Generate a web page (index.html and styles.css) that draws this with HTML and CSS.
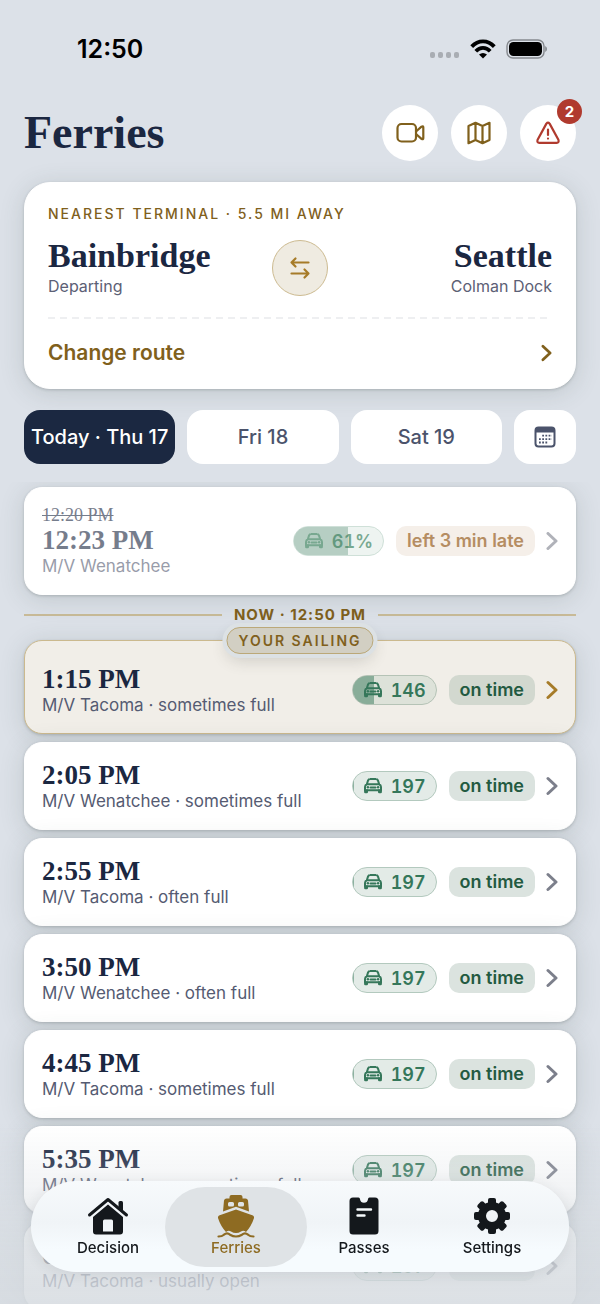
FILE: index.html
```html
<!DOCTYPE html>
<html lang="en">

<head>
  <meta charset="utf-8">
  <title>Ferries</title>
  <meta name="viewport" content="width=device-width, initial-scale=1.0">
  <link rel="stylesheet" href="styles.css">
</head>

<body>
  <!-- shared icons -->
  <svg class="sprite" aria-hidden="true">
    <symbol id="car" viewBox="0 0 20 18">
      <path d="M3.800 7.200 5 3.600Q5.500 2.200 7 2.100 10 1.800 13 2.100 14.500 2.200 15 3.600L16.200 7.200M3.800 7.200Q2 7.900 2 10V13.200H18V10Q18 7.900 16.200 7.200ZM7.500 10.600h5" fill="none" stroke="currentColor" stroke-width="2" stroke-linecap="round" stroke-linejoin="round" />
      <circle cx="4.900" cy="10.200" r="1.200" fill="currentColor" />
      <circle cx="15.100" cy="10.200" r="1.200" fill="currentColor" />
      <path d="M1.100 12.500H5V15q0 1.200-1.200 1.200H2.300Q1.100 16.200 1.100 15ZM15 12.500h3.900V15q0 1.200-1.200 1.200H16.200Q15 16.200 15 15Z" fill="currentColor" />
    </symbol>
    <symbol id="chevron" viewBox="0 0 12 20">
      <path d="M2 2.500 10 10 2 17.500" fill="none" stroke="currentColor" stroke-width="3" stroke-linecap="round" stroke-linejoin="round" />
    </symbol>
  </svg>

  <div class="screen">
    <div class="status-bar">
      <span class="clock">12:50</span>
      <div class="status-icons">
        <svg width="30" height="8" viewBox="0 0 30 8" fill="#a9adb3">
          <rect x="0" y="1" width="5" height="6" rx="2" />
          <rect x="8" y="1" width="5" height="6" rx="2" />
          <rect x="16" y="1" width="5" height="6" rx="2" />
          <rect x="24" y="1" width="5" height="6" rx="2" />
        </svg>
        <svg class="wifi" width="26" height="20" viewBox="0 0 26 20">
          <g fill="none" stroke="#000" stroke-width="3.800">
            <path d="M1.700 7.600Q6.500 2.300 13 2.300T24.300 7.600" />
            <path d="M5.800 12.200Q9 8.900 13 8.900t7.200 3.300" />
          </g>
          <path d="M13 19.500 9 15.600Q13 12.300 17 15.600Z" />
        </svg>
        <svg class="battery" width="41" height="20" viewBox="0 0 41 20">
          <rect x="1" y="1" width="37" height="18" rx="6" fill="none" stroke="#85898e" stroke-width="1.400" />
          <rect x="3" y="3" width="33" height="14" rx="4.500" />
          <path d="M39.200 7q1.800 1 1.800 3t-1.800 3Z" fill="#85898e" />
        </svg>
      </div>
    </div>

    <header class="header">
      <h1>Ferries</h1>
      <div class="actions">
        <button type="button" class="round-btn" aria-label="Cameras">
          <svg width="30" height="24" viewBox="0 0 30 24" fill="none" stroke="currentColor" stroke-width="2.200" stroke-linejoin="round">
            <rect x="2.500" y="3" width="18.500" height="17.500" rx="4" />
            <path d="M21 10.500 26.500 5.700Q28.300 4.700 28.300 6.300V17.200Q28.300 18.800 26.500 17.800L21 13" />
          </svg>
        </button>
        <button type="button" class="round-btn" aria-label="Map">
          <svg width="26" height="24" viewBox="0 0 26 24" fill="none" stroke="currentColor" stroke-width="2.200" stroke-linejoin="round">
            <path d="M2.500 5 9.500 1.800 16.500 5 23.500 1.800V19L16.500 22.200 9.500 19 2.500 22.200ZM9.500 1.800V19M16.500 5V22.200" />
          </svg>
        </button>
        <button type="button" class="round-btn alert" aria-label="Alerts">
          <svg width="26" height="24" viewBox="0 0 26 24" fill="none" stroke="currentColor" stroke-width="2.200" stroke-linecap="round" stroke-linejoin="round">
            <path d="M11.400 2.600Q13 .6 14.600 2.600L23.400 18.800Q24.300 21.800 21.700 21.800H4.300Q1.700 21.800 2.600 18.800ZM13 8.500v5.500M13 17.500v.1" />
          </svg>
          <span class="count">2</span>
        </button>
      </div>
    </header>

    <section class="card route">
      <p class="eyebrow">NEAREST TERMINAL · 5.5 MI AWAY</p>
      <div class="terminals">
        <div class="terminal">
          <h2>Bainbridge</h2>
          <p>Departing</p>
        </div>
        <button type="button" class="swap" aria-label="Swap direction">
          <svg width="24" height="24" viewBox="0 0 24 24" fill="none" stroke="currentColor" stroke-width="2.200" stroke-linecap="round" stroke-linejoin="round">
            <path d="M20.500 6.500H3.500M7.500 2.500 3.500 6.500 7.500 10.500M3.500 17.500H20.500M16.500 13.500 20.500 17.500 16.500 21.500" />
          </svg>
        </button>
        <div class="terminal arriving">
          <h2>Seattle</h2>
          <p>Colman Dock</p>
        </div>
      </div>
      <a href="#" class="change">
        Change route
        <svg width="11" height="18"><use href="#chevron" /></svg>
      </a>
    </section>

    <div class="dates">
      <button type="button" class="date selected">Today · Thu 17</button>
      <button type="button" class="date">Fri 18</button>
      <button type="button" class="date">Sat 19</button>
      <button type="button" class="date pick" aria-label="Pick a date">
        <svg width="22" height="22" viewBox="0 0 22 22">
          <rect x="1.500" y="1.500" width="19" height="19" rx="3" fill="none" stroke="currentColor" stroke-width="2" />
          <path d="M1.500 2h19v4.500h-19Z" fill="currentColor" />
          <path d="M8.200 9.700H18M5 13.100H18M5 16.500H14.600" stroke="currentColor" stroke-width="1.800" stroke-dasharray="1.800 1.400" />
        </svg>
      </button>
    </div>

    <main class="sailings">
      <a href="#" class="card sailing departed">
        <div class="info">
          <s>12:20 PM</s>
          <h3>12:23 PM</h3>
          <p>M/V Wenatchee</p>
        </div>
        <span class="space"><span class="fill" style="width: 61%"></span><svg width="20" height="18"><use href="#car" /></svg>61%</span>
        <span class="state late">left 3 min late</span>
        <svg class="go" width="12" height="20"><use href="#chevron" /></svg>
      </a>

      <div class="now">NOW · 12:50 PM</div>

      <a href="#" class="card sailing yours">
        <span class="tag">YOUR SAILING</span>
        <div class="info">
          <h3>1:15 PM</h3>
          <p>M/V Tacoma · sometimes full</p>
        </div>
        <span class="space"><span class="fill" style="width: 26%"></span><svg width="20" height="18"><use href="#car" /></svg>146</span>
        <span class="state">on time</span>
        <svg class="go" width="12" height="20"><use href="#chevron" /></svg>
      </a>

      <a href="#" class="card sailing">
        <div class="info">
          <h3>2:05 PM</h3>
          <p>M/V Wenatchee · sometimes full</p>
        </div>
        <span class="space"><span class="fill" style="width: 1%"></span><svg width="20" height="18"><use href="#car" /></svg>197</span>
        <span class="state">on time</span>
        <svg class="go" width="12" height="20"><use href="#chevron" /></svg>
      </a>

      <a href="#" class="card sailing">
        <div class="info">
          <h3>2:55 PM</h3>
          <p>M/V Tacoma · often full</p>
        </div>
        <span class="space"><span class="fill" style="width: 1%"></span><svg width="20" height="18"><use href="#car" /></svg>197</span>
        <span class="state">on time</span>
        <svg class="go" width="12" height="20"><use href="#chevron" /></svg>
      </a>

      <a href="#" class="card sailing">
        <div class="info">
          <h3>3:50 PM</h3>
          <p>M/V Wenatchee · often full</p>
        </div>
        <span class="space"><span class="fill" style="width: 1%"></span><svg width="20" height="18"><use href="#car" /></svg>197</span>
        <span class="state">on time</span>
        <svg class="go" width="12" height="20"><use href="#chevron" /></svg>
      </a>

      <a href="#" class="card sailing">
        <div class="info">
          <h3>4:45 PM</h3>
          <p>M/V Tacoma · sometimes full</p>
        </div>
        <span class="space"><span class="fill" style="width: 1%"></span><svg width="20" height="18"><use href="#car" /></svg>197</span>
        <span class="state">on time</span>
        <svg class="go" width="12" height="20"><use href="#chevron" /></svg>
      </a>

      <a href="#" class="card sailing">
        <div class="info">
          <h3>5:35 PM</h3>
          <p>M/V Wenatchee · sometimes full</p>
        </div>
        <span class="space"><span class="fill" style="width: 1%"></span><svg width="20" height="18"><use href="#car" /></svg>197</span>
        <span class="state">on time</span>
        <svg class="go" width="12" height="20"><use href="#chevron" /></svg>
      </a>

      <a href="#" class="card sailing">
        <div class="info">
          <h3>6:30 PM</h3>
          <p>M/V Tacoma · usually open</p>
        </div>
        <span class="space"><span class="fill" style="width: 1%"></span><svg width="20" height="18"><use href="#car" /></svg>197</span>
        <span class="state">on time</span>
        <svg class="go" width="12" height="20"><use href="#chevron" /></svg>
      </a>
    </main>
  </div>

  <div class="fade"></div>

  <nav class="tab-bar">
    <a href="#" class="tab">
      <svg width="42" height="40" viewBox="0 0 42 40" fill="currentColor">
        <path d="M2.500 19 21 3.500 39.500 19" fill="none" stroke="currentColor" stroke-width="3" stroke-linecap="round" stroke-linejoin="round" />
        <path d="M31.500 6.500q0-1.500 1.500-1.500h1.500q1.500 0 1.500 1.500V15L31.500 11Z" />
        <path fill-rule="evenodd" d="M21 8.500 36 21V35.500q0 3-3 3H9q-3 0-3-3V21ZM17.500 23.500q-1.500 0-1.500 1.500V35.500h10V25q0-1.500-1.500-1.500Z" />
      </svg>
      Decision
    </a>
    <a href="#" class="tab active">
      <svg width="38" height="44" viewBox="0 0 38 44" fill="currentColor">
        <path fill-rule="evenodd" d="M12.500 3q0-2 2-2h9q2 0 2 2v1.500h3q2 0 2.500 2l1 11L19 12.800 6 17.500 7 6.500Q7.500 4.500 9.500 4.500h3ZM12.500 8q-1.500 0-1.500 1.500v1.500Q11 12.500 12.500 12.500h3q1.500 0 1.500-1.500v-1.500Q17 8 15.500 8ZM22.500 8q-1.500 0-1.500 1.500v1.500Q21 12.500 22.500 12.500h3q1.500 0 1.500-1.500v-1.500Q27 8 25.500 8Z" />
        <path d="M19 15.500 36 21.500q1.500 1 1 2.500Q34.500 32 29 38q-2.500-2-5-.500-5 3-10 0-2.500-1.500-5 .500Q3.500 32 1 24q-.5-1.500 1-2.500Z" />
        <path d="M1.500 42.500Q5 42.500 7 40.700q3-2.500 6 0 6 3.600 12 0 3-2.500 6 0Q33 42.500 36.500 42.500" fill="none" stroke="currentColor" stroke-width="2.200" stroke-linecap="round" />
      </svg>
      Ferries
    </a>
    <a href="#" class="tab">
      <svg width="30" height="40" viewBox="0 0 30 40">
        <path fill="currentColor" d="M4 1.500H9.500Q11 1.500 11 3.200 11.600 6.800 15 6.800T19 3.200Q19 1.500 20.500 1.500H26Q29.500 1.500 29.500 5V35Q29.500 38.500 26 38.500H4Q.5 38.500 .5 35V5Q.5 1.500 4 1.500Z" />
        <path d="M8.500 13.500H22M8.500 19.500h7" stroke="#f6fafc" stroke-width="2.400" stroke-linecap="round" />
      </svg>
      Passes
    </a>
    <a href="#" class="tab">
      <svg width="38" height="40" viewBox="-19 -20 38 40" fill="currentColor">
        <circle r="10" fill="none" stroke="currentColor" stroke-width="8" />
        <g id="tooth"><rect x="-4" y="-18" width="8" height="8" rx="2" /><rect x="-4" y="10" width="8" height="8" rx="2" /></g>
        <use href="#tooth" transform="rotate(45)" />
        <use href="#tooth" transform="rotate(90)" />
        <use href="#tooth" transform="rotate(135)" />
      </svg>
      Settings
    </a>
  </nav>
</body>

</html>
```
FILE: styles.css
```css
* {
  box-sizing: border-box;
}

body {
  margin: 0;
  background: #dce1e8;
  color: #1b2741;
  font-family: Inter, "Liberation Sans", sans-serif;
}

h1, h2, h3, p {
  margin: 0;
}

h1, h2, h3, s {
  font-family: "Liberation Serif", serif;
}

a {
  color: inherit;
  text-decoration: none;
}

button {
  border: 0;
  padding: 0;
  font: inherit;
  cursor: pointer;
}

svg {
  display: block;
  flex: none;
}

.sprite {
  position: absolute;
  width: 0;
  height: 0;
}

.screen {
  display: flex;
  flex-direction: column;
  height: 100vh;
  overflow: hidden;
}

/* status bar */
.status-bar {
  display: flex;
  align-items: center;
  justify-content: space-between;
  flex: none;
  height: 97px;
  padding: 0 53px 0 77px;
  color: #000000;
}

.clock {
  font-size: 25px;
  font-weight: 600;
}

.status-icons {
  display: flex;
  align-items: flex-end;
}

.wifi {
  margin: 0 10px;
}

/* title row */
.header {
  display: flex;
  align-items: center;
  justify-content: space-between;
  flex: none;
  padding: 8px 24px 21px;
}

h1 {
  font-size: 46px;
  line-height: 56px;
}

.actions {
  display: flex;
  gap: 13px;
}

.round-btn {
  position: relative;
  display: flex;
  align-items: center;
  justify-content: center;
  width: 56px;
  height: 56px;
  border-radius: 50%;
  background: #ffffff;
  color: #80601c;
}

.alert {
  color: #b03a2e;
}

.count {
  position: absolute;
  top: -6px;
  right: -6px;
  width: 25px;
  height: 25px;
  border-radius: 50%;
  background: #b03a2e;
  color: #ffffff;
  font-size: 15px;
  font-weight: 700;
  line-height: 25px;
  text-align: center;
}

.card {
  border: 1px solid #ffffff;
  border-radius: 18px;
  background: #ffffff;
  box-shadow: 0 1px 3px rgba(40, 50, 50, 0.2), 0 4px 24px rgba(60, 75, 70, 0.17);
}

/* route card */
.route {
  flex: none;
  margin: 0 24px;
  padding: 21px 23px 18px;
  border-radius: 26px;
}

.eyebrow {
  color: #80601c;
  font-size: 14px;
  font-weight: 500;
  letter-spacing: 2px;
  line-height: 20px;
}

.terminals {
  display: grid;
  grid-template-columns: 1fr auto 1fr;
  align-items: center;
  padding: 14px 0 21px;
  background: repeating-linear-gradient(90deg, #eeeff1 0 7px, transparent 7px 12px) bottom / 100% 2px no-repeat;
}

.terminal h2 {
  font-size: 34px;
  line-height: 36px;
}

.terminal p {
  color: #5c6075;
  font-size: 16px;
  line-height: 24px;
}

.arriving {
  text-align: right;
}

.swap {
  display: flex;
  align-items: center;
  justify-content: center;
  width: 56px;
  height: 56px;
  border: 1px solid #cdbb91;
  border-radius: 50%;
  background: #efebe1;
  color: #a67b28;
}

.change {
  display: flex;
  align-items: center;
  justify-content: space-between;
  padding-top: 17px;
  color: #80601c;
  font-size: 21px;
  font-weight: 600;
  line-height: 34px;
}

/* date picker */
.dates {
  display: grid;
  grid-template-columns: 1fr 1fr 1fr 62px;
  flex: none;
  gap: 12px;
  padding: 21px 24px 18px;
}

.date {
  display: flex;
  align-items: center;
  justify-content: center;
  height: 54px;
  border-radius: 16px;
  background: #ffffff;
  color: #4b536b;
  font-size: 20px;
  font-weight: 500;
  white-space: nowrap;
}

.selected {
  background: #1b2841;
  color: #ffffff;
}

/* list of sailings */
.sailings {
  display: flex;
  flex: 1;
  flex-direction: column;
  gap: 8px;
  min-height: 0;
  padding: 5px 24px 0;
  overflow: hidden;
}

.sailing {
  position: relative;
  display: flex;
  align-items: center;
  flex: none;
  padding: 17px;
}

.info {
  flex: 1;
}

.info s {
  display: block;
  font-size: 18px;
  line-height: 20px;
}

.info h3 {
  font-size: 27px;
  line-height: 30px;
}

.info p {
  color: #555b72;
  font-size: 17px;
  line-height: 22px;
}

.space {
  position: relative;
  display: flex;
  align-items: center;
  gap: 8px;
  height: 30px;
  margin-right: 12px;
  padding: 0 10px;
  border: 1px solid #b3c9be;
  border-radius: 15px;
  background: #e3ebe7;
  color: #35775a;
  font-size: 18px;
  font-variant-numeric: tabular-nums;
  font-weight: 600;
  overflow: hidden;
}

.space svg {
  position: relative;
}

.fill {
  position: absolute;
  top: 0;
  bottom: 0;
  left: 0;
  background: rgba(53, 119, 90, 0.5);
}

.state {
  margin-right: 11px;
  padding: 0 11px;
  border-radius: 10px;
  background: #dbe3df;
  color: #235a41;
  font-size: 18px;
  font-weight: 600;
  line-height: 30px;
}

.go {
  color: #7c7f8b;
}

.departed .info,
.departed .go {
  opacity: 0.6;
}

.departed .space {
  border-color: #cfe0d8;
  background: #eef4f1;
  color: #78a890;
}

.departed .fill {
  background: rgba(53, 119, 90, 0.3);
}

.departed .late {
  background: #f5efe9;
  color: #b58d62;
}

.now {
  display: flex;
  align-items: center;
  gap: 12px;
  margin-bottom: 5px;
  color: #80601c;
  font-size: 15px;
  font-weight: 700;
  letter-spacing: 1px;
  line-height: 24px;
}

.now::before,
.now::after {
  content: "";
  flex: 1;
  height: 2px;
  background: #c9bb98;
}

.yours {
  padding-top: 23px;
  border-color: #cbb98e;
  background: #f1eee8;
}

.yours .space {
  border-color: #b5c3b6;
  background: #dde2d9;
}

.yours .state {
  background: #d2d8cf;
}

.yours .go {
  color: #a67b28;
}

.tag {
  position: absolute;
  top: -14px;
  left: 50%;
  padding: 0 11px;
  border: 1px solid #bba878;
  border-radius: 14px;
  background: #d2cfc3;
  box-shadow: 0 0 0 4px #dce1e4, 0 6px 16px rgba(60, 60, 50, 0.2);
  color: #80601c;
  font-size: 14px;
  font-weight: 600;
  letter-spacing: 2px;
  line-height: 25px;
  white-space: nowrap;
  transform: translateX(-50%);
}

/* bottom navigation */
.fade {
  position: fixed;
  right: 0;
  bottom: 0;
  left: 0;
  height: 180px;
  background: linear-gradient(rgba(214, 219, 224, 0), rgba(214, 219, 224, 0.3) 35%, rgba(214, 219, 224, 0.75) 70%, rgba(214, 219, 224, 0.85));
  pointer-events: none;
}

.tab-bar {
  position: fixed;
  right: 31px;
  bottom: 32px;
  left: 31px;
  display: flex;
  padding: 6px 13px 5px;
  border-radius: 46px;
  background: linear-gradient(#f7fafc, #f0f4f7 45%, #f6fbfe 75%);
  box-shadow: 0 2px 14px rgba(40, 50, 60, 0.1);
}

.tab {
  position: relative;
  display: flex;
  flex: 1;
  flex-direction: column;
  align-items: center;
  justify-content: flex-end;
  height: 80px;
  padding-bottom: 9px;
  color: #14181c;
  font-size: 15px;
  font-weight: 500;
  line-height: 20px;
}

.tab svg {
  position: relative;
  margin-bottom: 2px;
}

.active {
  z-index: 0;
  color: #8e6b22;
}

.tab.active svg {
  margin-bottom: 0;
}

.active::before {
  content: "";
  position: absolute;
  inset: 0 -7px;
  z-index: -1;
  border-radius: 40px;
  background: #dfe3e6;
}
```
